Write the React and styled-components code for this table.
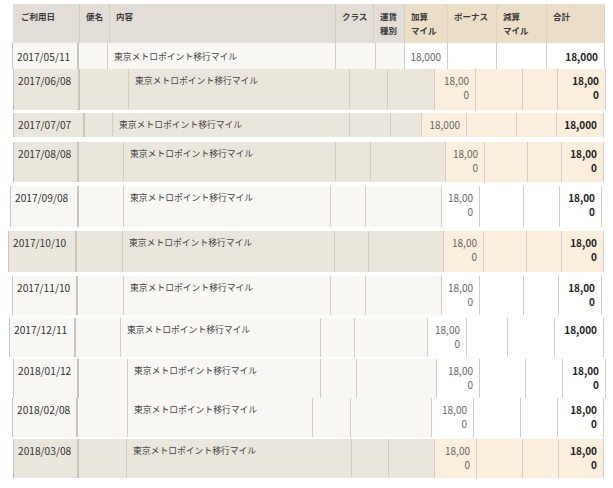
import React from "react";
import styled, { createGlobalStyle } from "styled-components";

const GlobalStyle = createGlobalStyle`
  * { box-sizing: border-box; }
  body {
    margin: 0;
    background: #ffffff;
    font-family: "Noto Sans CJK JP", "Noto Sans", sans-serif;
    color: #333;
  }
`;

const palette = {
  headGray: "#e2ddd6",
  headBeige: "#ecdec6",
  darkBase: "#ebe6dc",
  darkAmount: "#fbeedc",
  lightBase: "#f8f7f3",
  lightAmount: "#ffffff",
  line: "#d3cdc5",
  edge: "#c9c4bd",
};

const columns = [
  { key: "date", label: ["ご利用日"] },
  { key: "flight", label: ["便名"] },
  { key: "detail", label: ["内容"] },
  { key: "class", label: ["クラス"] },
  { key: "fare", label: ["運賃", "種別"] },
  { key: "add", label: ["加算", "マイル"] },
  { key: "bonus", label: ["ボーナス"] },
  { key: "sub", label: ["減算", "マイル"] },
  { key: "total", label: ["合計"] },
];

const header = { x: [13, 80, 110, 336, 374, 405, 448, 497, 547, 605], top: 4, bottom: 43 };

const two = ["18,00", "0"];
const one = ["18,000"];

const rows = [
  { date: "2017/05/11", x: [12, 79, 108, 336, 376, 405, 448, 497, 547, 605], top: 43, bottom: 69, dark: false, add: one, total: one, pad: 7 },
  { date: "2017/06/08", x: [13, 80, 129, 350, 388, 435, 476, 523, 558, 606], top: 69, bottom: 110, dark: true, add: two, total: two },
  { date: "2017/07/07", x: [13, 85, 113, 350, 391, 422, 467, 517, 557, 604], top: 113, bottom: 137, dark: true, add: one, total: one },
  { date: "2017/08/08", x: [13, 79, 124, 336, 371, 446, 485, 528, 562, 604], top: 142, bottom: 182, dark: true, add: two, total: two },
  { date: "2017/09/08", x: [10, 79, 124, 331, 366, 442, 480, 524, 560, 602], top: 186, bottom: 227, dark: false, add: two, total: two },
  { date: "2017/10/10", x: [8, 77, 123, 335, 369, 444, 484, 527, 562, 604], top: 231, bottom: 272, dark: true, add: two, total: two },
  { date: "2017/11/10", x: [12, 78, 124, 331, 366, 442, 480, 524, 559, 602], top: 276, bottom: 315, dark: false, add: two, total: two },
  { date: "2017/12/11", x: [9, 76, 121, 321, 355, 428, 467, 508, 555, 604], top: 318, bottom: 357, dark: false, add: two, total: one },
  { date: "2018/01/12", x: [13, 79, 128, 321, 357, 437, 480, 526, 563, 606], top: 359, bottom: 398, dark: false, add: two, total: two },
  { date: "2018/02/08", x: [12, 78, 128, 313, 351, 432, 474, 521, 558, 604], top: 398, bottom: 437, dark: false, add: two, total: two },
  { date: "2018/03/08", x: [13, 79, 127, 352, 389, 435, 477, 523, 559, 604], top: 439, bottom: 478, dark: true, add: two, total: two },
];

const widths = (x) =>
  x
    .slice(1)
    .map((v, i) => `${v - x[i]}px`)
    .join(" ");

const Page = styled.div`
  display: flex;
  flex-direction: column;
  width: 613px;
  height: 488px;
  overflow: hidden;
`;

const Row = styled.div`
  display: grid;
  grid-template-columns: ${({ $cols }) => $cols};
  height: ${({ $h }) => $h}px;
  margin-left: ${({ $left }) => $left}px;
  margin-top: ${({ $gap }) => $gap}px;
  flex-shrink: 0;
`;

const HeadCell = styled.div`
  background: ${({ $beige }) => ($beige ? palette.headBeige : palette.headGray)};
  border-right: 1px solid ${({ $beige }) => ($beige ? "#e1d2b9" : "#d2ccc4")};
  padding: 5px 0 0 ${({ $first }) => ($first ? 8 : 6)}px;
  font-size: 8.5px;
  font-weight: 700;
  line-height: 14px;
  color: #3a3a3a;
  white-space: nowrap;
`;

const cellPadLeft = ({ $right, $first }) => {
  if ($right) return 0;
  return $first ? 4 : 6;
};

const Cell = styled.div`
  background: ${({ $bg }) => $bg};
  border-right: ${({ $thick }) => ($thick ? 2 : 1)}px solid
    ${({ $thick }) => ($thick ? palette.edge : palette.line)};
  border-left: ${({ $first }) => ($first ? `1px solid ${palette.edge}` : "none")};
  padding-top: ${({ $top }) => $top}px;
  padding-right: ${({ $right }) => ($right ? 6 : 0)}px;
  padding-left: ${(p) => cellPadLeft(p)}px;
  font-size: 10px;
  line-height: 14px;
  white-space: nowrap;
  text-align: ${({ $right }) => ($right ? "right" : "left")};
`;

const DateText = styled.div`
  font-size: 10.2px;
  color: #333;
`;

const DetailText = styled.div`
  font-size: 8.8px;
  color: #444;
`;

const Amount = styled.div`
  font-size: 10px;
  color: ${({ $bold }) => ($bold ? "#222" : "#666")};
  font-weight: ${({ $bold }) => ($bold ? 700 : 400)};
`;

const Lines = ({ lines, bold }) =>
  lines.map((l, i) => (
    <Amount key={i} $bold={bold}>
      {l}
    </Amount>
  ));

const HeaderRow = () => (
  <Row
    $cols={widths(header.x)}
    $h={header.bottom - header.top}
    $left={header.x[0]}
    $gap={header.top}
  >
    {columns.map((c, i) => (
      <HeadCell key={c.key} $beige={i >= 5} $first={i === 0}>
        {c.label.map((l) => (
          <div key={l}>{l}</div>
        ))}
      </HeadCell>
    ))}
  </Row>
);

const DataRow = ({ row, gap }) => {
  const base = row.dark ? palette.darkBase : palette.lightBase;
  const amount = row.dark ? palette.darkAmount : palette.lightAmount;
  const top = row.pad ?? 5;
  return (
    <Row
      $cols={widths(row.x)}
      $h={row.bottom - row.top}
      $left={row.x[0]}
      $gap={gap}
    >
      <Cell $bg={base} $top={top} $first $thick>
        <DateText>{row.date}</DateText>
      </Cell>
      <Cell $bg={base} $top={top} />
      <Cell $bg={base} $top={top}>
        <DetailText>東京メトロポイント移行マイル</DetailText>
      </Cell>
      <Cell $bg={base} $top={top} />
      <Cell $bg={base} $top={top} />
      <Cell $bg={amount} $top={top} $right>
        <Lines lines={row.add} />
      </Cell>
      <Cell $bg={amount} $top={top} />
      <Cell $bg={amount} $top={top} />
      <Cell $bg={amount} $top={top} $right>
        <Lines lines={row.total} bold />
      </Cell>
    </Row>
  );
};

export default function App() {
  return (
    <Page>
      <GlobalStyle />
      <HeaderRow />
      {rows.map((row, i) => (
        <DataRow
          key={row.date}
          row={row}
          gap={row.top - (i === 0 ? header.bottom : rows[i - 1].bottom)}
        />
      ))}
    </Page>
  );
}
